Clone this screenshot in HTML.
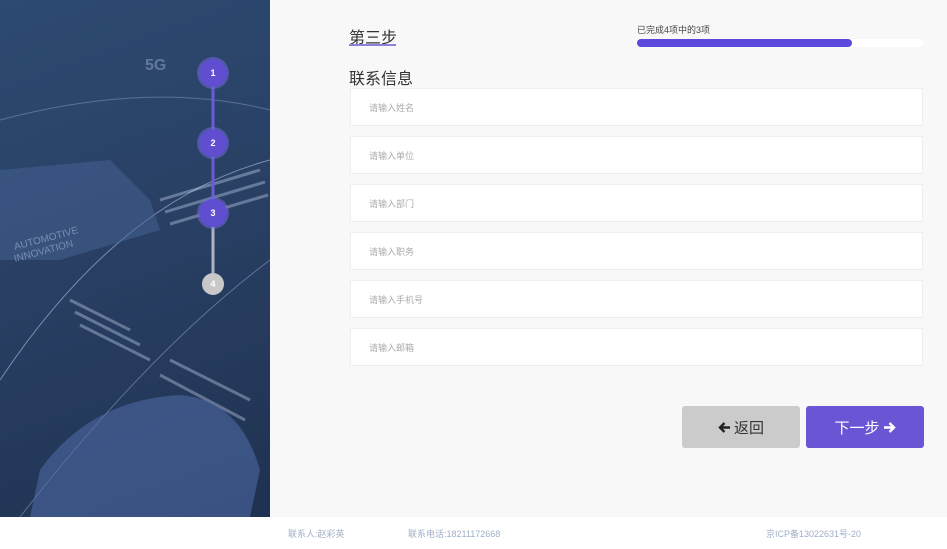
<!DOCTYPE html>
<html><head><meta charset="utf-8"><style>
*{margin:0;padding:0;box-sizing:border-box}
body{width:947px;height:549px;overflow:hidden;background:#f8f8f9;font-family:"Liberation Sans","Noto Sans CJK SC",sans-serif;position:relative}
.left{position:absolute;left:0;top:0;width:270px;height:517px;background:linear-gradient(160deg,#2c4a72 0%,#2a4166 40%,#253a5c 70%,#1f3150 100%);overflow:hidden}
.inp{position:absolute;left:350px;width:573px;height:38px;background:#fff;border:1px solid #eeeeef;font-size:9px;color:#aaa;padding:12px 0 0 18px}
.step{position:absolute;left:199px;width:28px;height:28px;border-radius:50%;background:#5f4fd0;color:#fff;font-size:9px;font-weight:bold;text-align:center;line-height:28px;box-shadow:0 0 0 2px rgba(120,110,220,.5)}
.foot{position:absolute;top:517px;left:0;width:947px;height:32px;background:#fff;font-size:9px;color:#9fb0c6}
.btn{position:absolute;top:406px;height:42px;width:118px;border-radius:3px;font-size:15px;display:flex;align-items:center;justify-content:center;gap:3px}
</style></head><body>
<div class="left">
<svg width="270" height="517" style="position:absolute;left:0;top:0">
<path d="M0 380 Q120 200 270 160" stroke="rgba(200,220,255,.5)" fill="none"/>
<path d="M0 120 Q150 80 270 110" stroke="rgba(200,220,255,.3)" fill="none"/>
<path d="M20 517 Q150 350 270 260" stroke="rgba(200,220,255,.35)" fill="none"/>
<g stroke="rgba(220,230,255,.35)" stroke-width="3">
<line x1="70" y1="300" x2="130" y2="330"/><line x1="75" y1="312" x2="140" y2="345"/><line x1="80" y1="325" x2="150" y2="360"/><line x1="170" y1="360" x2="250" y2="400"/><line x1="160" y1="375" x2="245" y2="420"/>
<line x1="160" y1="200" x2="260" y2="170"/><line x1="165" y1="212" x2="265" y2="182"/><line x1="170" y1="224" x2="268" y2="195"/>
</g>
<path d="M0 170 L110 160 L150 200 L160 230 L60 260 L0 260Z" fill="rgba(70,100,150,.5)"/>
<path d="M40 470 Q90 400 180 395 Q240 400 260 470 L250 517 L30 517Z" fill="rgba(80,110,170,.55)"/>
<text x="145" y="70" fill="rgba(200,215,240,.35)" font-size="16" font-weight="bold">5G</text>
<text x="15" y="250" fill="rgba(200,215,240,.45)" font-size="10" transform="rotate(-15 15 250)">AUTOMOTIVE</text>
<text x="15" y="262" fill="rgba(200,215,240,.45)" font-size="10" transform="rotate(-15 15 262)">INNOVATION</text>
<line x1="213" y1="73" x2="213" y2="213" stroke="#6a5bd8" stroke-width="3"/>
<line x1="213" y1="213" x2="213" y2="284" stroke="#aab2c4" stroke-width="3"/>
</svg>
<div class="step" style="top:59px">1</div>
<div class="step" style="top:129px">2</div>
<div class="step" style="top:199px">3</div>
<div class="step" style="top:273px;left:202px;width:22px;height:22px;line-height:22px;background:#c8c8c8;box-shadow:none">4</div>
</div>
<div style="position:absolute;left:349px;top:24px;font-size:16px;color:#333">第三步</div>
<div style="position:absolute;left:349px;top:44px;width:47px;height:2px;background:#8a82d8"></div>
<div style="position:absolute;left:637px;top:23px;font-size:9px;color:#444">已完成4项中的3项</div>
<div style="position:absolute;left:637px;top:39px;width:286px;height:8px;border-radius:4px;background:#fff"></div>
<div style="position:absolute;left:637px;top:39px;width:215px;height:8px;border-radius:4px;background:#5b49dd"></div>
<div style="position:absolute;left:349px;top:65px;font-size:16px;color:#333">联系信息</div>
<div class="inp" style="top:88px">请输入姓名</div>
<div class="inp" style="top:136px">请输入单位</div>
<div class="inp" style="top:184px">请输入部门</div>
<div class="inp" style="top:232px">请输入职务</div>
<div class="inp" style="top:280px">请输入手机号</div>
<div class="inp" style="top:328px">请输入邮箱</div>
<div class="btn" style="left:682px;background:#cbcbcb;color:#333"><svg width="13" height="13" viewBox="0 0 13 13"><path d="M12 6.5H2M6.5 2L2 6.5 6.5 11" stroke="#222" stroke-width="2.4" fill="none"/></svg>返回</div>
<div class="btn" style="left:806px;background:#6a56d4;color:#fff">下一步<svg width="13" height="13" viewBox="0 0 13 13"><path d="M1 6.5H11M6.5 2L11 6.5 6.5 11" stroke="#fff" stroke-width="2.4" fill="none"/></svg></div>
<div class="foot">
<span style="position:absolute;left:288px;top:10px">联系人:赵彩英</span>
<span style="position:absolute;left:408px;top:10px">联系电话:18211172668</span>
<span style="position:absolute;left:766px;top:10px">京ICP备13022631号-20</span>
</div>
</body></html>
